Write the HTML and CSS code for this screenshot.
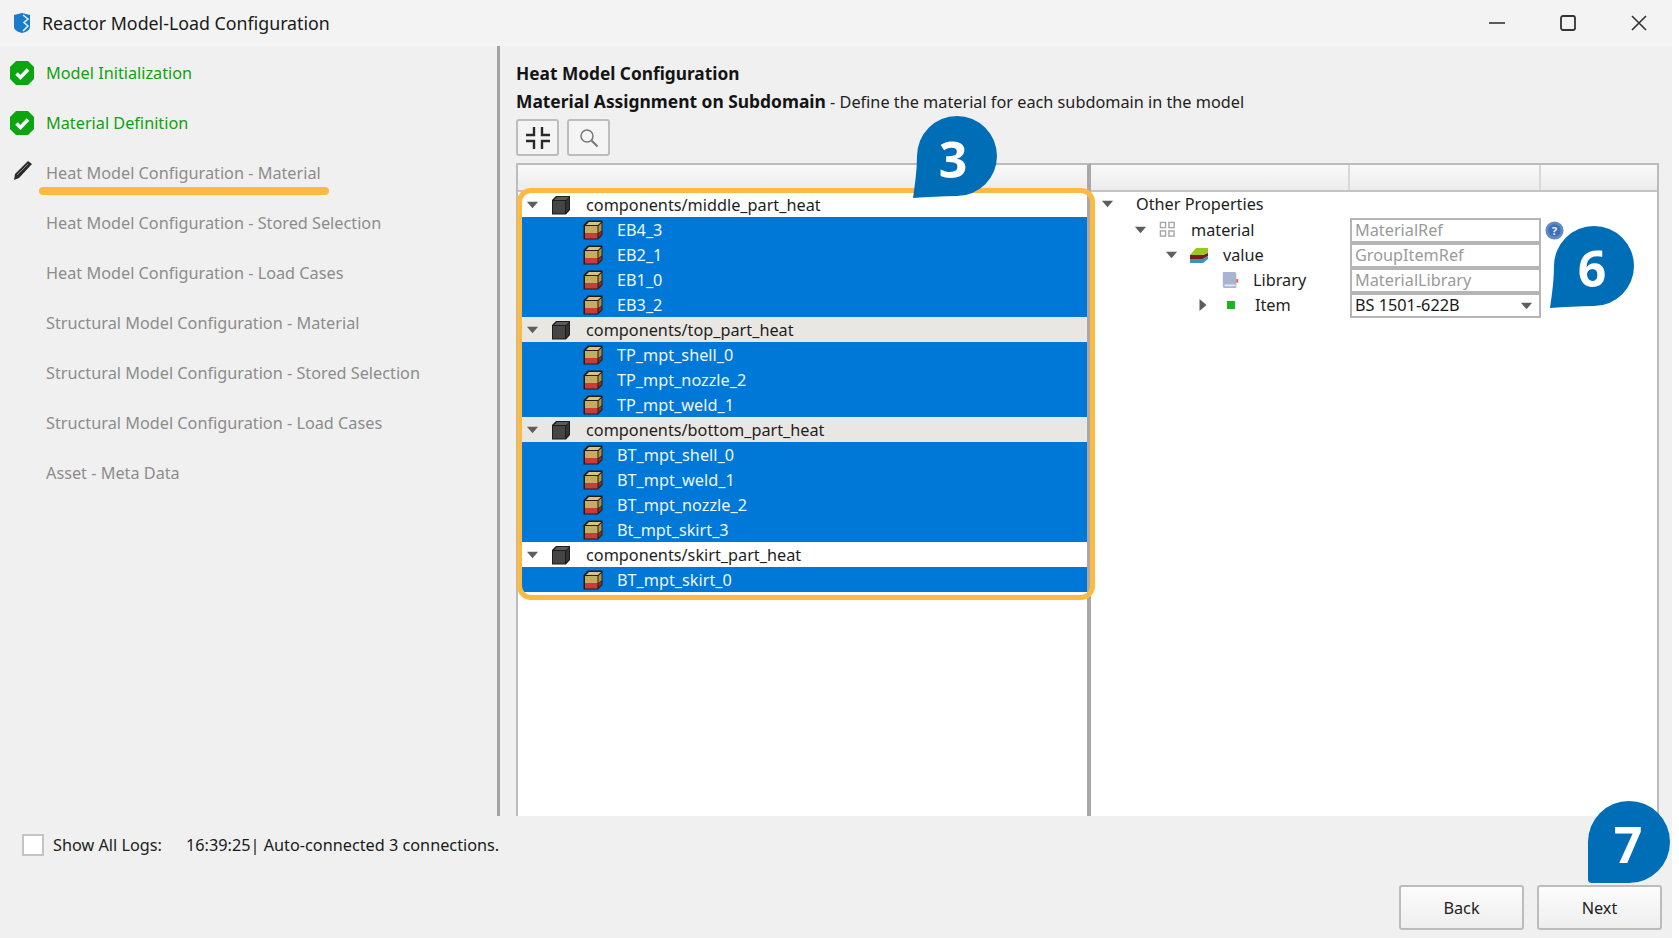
FILE: index.html
```html
<!DOCTYPE html>
<html lang="en">
<head>
<meta charset="utf-8">
<title>Reactor Model-Load Configuration</title>
<link rel="stylesheet" href="styles.css">
</head>
<body>
<svg class="defs" aria-hidden="true">
  <symbol id="tri-down" viewBox="0 0 14 8"><path d="M1 0.5H13L7 7.5Z" fill="#5e5e5e"/></symbol>
  <symbol id="tri-right" viewBox="0 0 8 14"><path d="M0.5 1V13L7.5 7Z" fill="#5e5e5e"/></symbol>
  <symbol id="group" viewBox="0 0 20 20"><path d="M1 5L5 1H19V15L15 19.5H1Z" fill="#1d1d1d"/><path d="M2 6H14V18.5H2Z" fill="#454545"/><path d="M3 5L6 2H18L15 5Z" fill="#5a5a5a"/><path d="M15 6L18 3V14L15 17.500Z" fill="#333"/></symbol>
  <symbol id="part" viewBox="0 0 20 20"><path d="M0.500 5L5 0.500H19.500V15L15 19.500H0.500Z" fill="#241c14"/><path d="M2 6H14.500V13H2Z" fill="#c4ad62"/><path d="M2 13H14.500V18.500H2Z" fill="#c93c3a"/><path d="M3 5L6 2H18L15 5Z" fill="#d8c47c"/><path d="M15.500 6L18.500 3V10.500L15.500 13Z" fill="#a8924c"/><path d="M15.500 13.500L18.500 11V14.500L15.500 17.500Z" fill="#8f2a28"/></symbol>
  <symbol id="check" viewBox="0 0 24 24"><path d="M6 0H18L24 6V18L18 24H6L0 18V6Z" fill="#0aa50f"/><path d="M6.500 12.500L10.500 16.500L18 8.500" fill="none" stroke="#fff" stroke-width="3.600"/></symbol>
</svg>

<div class="window">
  <header class="titlebar">
    <svg class="logo" viewBox="0 0 20 22"><path d="M2 3L10 1L18 3V15Q18 19 10 21Q2 19 2 15Z" fill="#1a7cc8"/><path d="M11 3L16 7L12 10.500L16 14L11 19" fill="none" stroke="#dcecf8" stroke-width="1.600"/></svg>
    <span class="title">Reactor Model-Load Configuration</span>
    <div class="controls">
      <span class="ctl"><svg viewBox="0 0 18 18"><path d="M1 9H17" stroke="#333" stroke-width="1.600"/></svg></span>
      <span class="ctl"><svg viewBox="0 0 18 18"><rect x="2" y="2" width="14" height="14" rx="2" fill="none" stroke="#333" stroke-width="1.800"/></svg></span>
      <span class="ctl"><svg viewBox="0 0 18 18"><path d="M2 2L16 16M16 2L2 16" stroke="#333" stroke-width="1.600"/></svg></span>
    </div>
  </header>

  <div class="main">
    <nav class="steps">
      <div class="step done"><svg class="step-icon"><use href="#check"/></svg><span>Model Initialization</span></div>
      <div class="step done"><svg class="step-icon"><use href="#check"/></svg><span>Material Definition</span></div>
      <div class="step active">
        <svg class="step-icon" viewBox="0 0 24 24"><path d="M4 22L5 16L18 3L22 6L9 20Z" fill="#2b2b2b"/><path d="M7 17L18 6" stroke="#8a8a8a" stroke-width="1"/></svg>
        <span>Heat Model Configuration - Material</span>
        <i class="underline"></i>
      </div>
      <div class="step"><span class="step-icon"></span><span>Heat Model Configuration - Stored Selection</span></div>
      <div class="step"><span class="step-icon"></span><span>Heat Model Configuration - Load Cases</span></div>
      <div class="step"><span class="step-icon"></span><span>Structural Model Configuration - Material</span></div>
      <div class="step"><span class="step-icon"></span><span>Structural Model Configuration - Stored Selection</span></div>
      <div class="step"><span class="step-icon"></span><span>Structural Model Configuration - Load Cases</span></div>
      <div class="step"><span class="step-icon"></span><span>Asset - Meta Data</span></div>
    </nav>

    <section class="content">
      <h1 class="heading">Heat Model Configuration</h1>
      <p class="sub"><b>Material Assignment on Subdomain</b> - Define the material for each subdomain in the model</p>
      <div class="tools">
        <button class="tool"><svg viewBox="0 0 26 26"><path d="M9 2V10H1M17 2V10H25M9 24V16H1M17 24V16H25" fill="none" stroke="#2a2a2a" stroke-width="2.400"/></svg></button>
        <button class="tool"><svg viewBox="0 0 20 20"><circle cx="8" cy="8" r="6" fill="none" stroke="#777" stroke-width="1.500"/><path d="M12.500 12.500L18.500 18.500" stroke="#777" stroke-width="2"/></svg></button>
      </div>

      <div class="panels">
        <div class="panel tree-panel">
          <div class="panel-head"></div>
          <div class="row group"><svg class="tri"><use href="#tri-down"/></svg><svg class="cube"><use href="#group"/></svg><span>components/middle_part_heat</span></div>
          <div class="row sel"><svg class="cube"><use href="#part"/></svg><span>EB4_3</span></div>
          <div class="row sel"><svg class="cube"><use href="#part"/></svg><span>EB2_1</span></div>
          <div class="row sel"><svg class="cube"><use href="#part"/></svg><span>EB1_0</span></div>
          <div class="row sel"><svg class="cube"><use href="#part"/></svg><span>EB3_2</span></div>
          <div class="row group alt"><svg class="tri"><use href="#tri-down"/></svg><svg class="cube"><use href="#group"/></svg><span>components/top_part_heat</span></div>
          <div class="row sel"><svg class="cube"><use href="#part"/></svg><span>TP_mpt_shell_0</span></div>
          <div class="row sel"><svg class="cube"><use href="#part"/></svg><span>TP_mpt_nozzle_2</span></div>
          <div class="row sel"><svg class="cube"><use href="#part"/></svg><span>TP_mpt_weld_1</span></div>
          <div class="row group alt"><svg class="tri"><use href="#tri-down"/></svg><svg class="cube"><use href="#group"/></svg><span>components/bottom_part_heat</span></div>
          <div class="row sel"><svg class="cube"><use href="#part"/></svg><span>BT_mpt_shell_0</span></div>
          <div class="row sel"><svg class="cube"><use href="#part"/></svg><span>BT_mpt_weld_1</span></div>
          <div class="row sel"><svg class="cube"><use href="#part"/></svg><span>BT_mpt_nozzle_2</span></div>
          <div class="row sel"><svg class="cube"><use href="#part"/></svg><span>Bt_mpt_skirt_3</span></div>
          <div class="row group"><svg class="tri"><use href="#tri-down"/></svg><svg class="cube"><use href="#group"/></svg><span>components/skirt_part_heat</span></div>
          <div class="row sel"><svg class="cube"><use href="#part"/></svg><span>BT_mpt_skirt_0</span></div>
          <div class="highlight"></div>
        </div>

        <div class="panel prop-panel">
          <div class="panel-head cols"><i></i><i></i><i></i></div>
          <div class="prop"><div class="pname lv0"><svg class="tri"><use href="#tri-down"/></svg><span>Other Properties</span></div></div>
          <div class="prop">
            <div class="pname lv1"><svg class="tri"><use href="#tri-down"/></svg>
              <svg class="picon" viewBox="0 0 18 18"><g fill="none" stroke="#a8a8a8" stroke-width="1.500"><rect x="1.500" y="1.500" width="5.500" height="5.500"/><rect x="10.500" y="1.500" width="5.500" height="5.500"/><rect x="1.500" y="10.500" width="5.500" height="5.500"/><rect x="10.500" y="10.500" width="5.500" height="5.500"/></g></svg>
              <span>material</span></div>
            <div class="field ro">MaterialRef</div>
            <svg class="help" viewBox="0 0 20 20"><circle cx="10" cy="10" r="9.500" fill="#5f8ac6"/><circle cx="10" cy="10" r="6.500" fill="#3f6fb5"/><text x="10" y="14.500" class="help-q">?</text></svg>
          </div>
          <div class="prop">
            <div class="pname lv2"><svg class="tri"><use href="#tri-down"/></svg>
              <svg class="picon" viewBox="0 0 20 18"><path d="M1 9L7 2H19V7L13 9Z" fill="#98c81e"/><path d="M1 9H14L19 7V10L14 13H1Z" fill="#7c1a22"/><path d="M1 13H14L19 10V13L14 17H1Z" fill="#3a92c4"/></svg>
              <span>value</span></div>
            <div class="field ro">GroupItemRef</div>
          </div>
          <div class="prop">
            <div class="pname lv3">
              <svg class="picon" viewBox="0 0 20 20"><path d="M2 2Q2 1 3 1H15Q17 1 17 3V18Q17 19 15 19H4Q2 19 2 17Z" fill="#a9b3d2"/><path d="M4 16H16" stroke="#e8e8ee" stroke-width="2"/><path d="M17 9H19V13H17Z" fill="#e8553f"/></svg>
              <span>Library</span></div>
            <div class="field ro">MaterialLibrary</div>
          </div>
          <div class="prop">
            <div class="pname lv4"><svg class="tri-r"><use href="#tri-right"/></svg>
              <svg class="dot" viewBox="0 0 8 8"><rect width="8" height="8" fill="#1eb31e"/></svg>
              <span>Item</span></div>
            <div class="field combo"><span>BS 1501-622B</span><svg class="tri"><use href="#tri-down"/></svg></div>
          </div>
        </div>
      </div>
    </section>
  </div>

  <div class="statusline">
    <span class="checkbox"></span>
    <span class="log-label">Show All Logs:</span>
    <span class="log-msg">16:39:25| Auto-connected 3 connections.</span>
  </div>
  <div class="actions">
    <button class="action">Back</button>
    <button class="action">Next</button>
  </div>

  <div class="badge badge-3"><svg viewBox="0 0 84 84"><path d="M0 82C2 68 4 54 4 40A40 40 0 1 1 44 80C30 80 14 81 0 82Z"/></svg><span>3</span></div>
  <div class="badge badge-6"><svg viewBox="0 0 84 84"><path d="M0 82C2 68 4 54 4 40A40 40 0 1 1 44 80C30 80 14 81 0 82Z"/></svg><span>6</span></div>
  <div class="badge badge-7"><svg viewBox="0 0 84 84"><path d="M0 80V42A42 42 0 1 1 42 84H4Q0 84 0 80Z"/></svg><span>7</span></div>
</div>
</body>
</html>
```

FILE: styles.css
```css
* { box-sizing: border-box; }
html, body { margin: 0; padding: 0; background: #fff; }
body { width: 1679px; height: 938px; overflow: hidden; font-family: "Noto Sans", "Liberation Sans", sans-serif; font-size: 16.25px; color: #1e1e1e; }
.defs { position: absolute; width: 0; height: 0; }

.window { position: relative; width: 1672px; height: 938px; background: #f0f0f0; display: flex; flex-direction: column; }

.titlebar { height: 46px; background: #f3f3f3; display: flex; align-items: center; padding-left: 12px; }
.logo { width: 20px; height: 22px; }
.title { margin-left: 10px; font-size: 17.8px; color: #1a1a1a; }
.controls { margin-left: auto; margin-right: -2px; display: flex; }
.ctl { width: 71px; display: flex; justify-content: center; }
.ctl svg { width: 18px; height: 18px; }

.main { height: 770px; display: flex; }

.steps { width: 500px; padding-top: 2px; border-right: 3px solid #a3a3a3; }
.step { position: relative; height: 50px; display: flex; align-items: center; color: #8c8c8c; padding-left: 10px; }
.step-icon { width: 24px; height: 24px; margin-right: 12px; flex: none; }
.step.done { color: #10a010; }
.step.active .step-icon { margin-top: -6px; }
.underline { position: absolute; left: 39px; top: 39px; width: 290px; height: 8px; border-radius: 4px; background: #fdb942; }

.content { flex: 1; padding-left: 16px; display: flex; flex-direction: column; }
.heading { margin: 15px 0 0; font-size: 17.3px; line-height: 26px; font-weight: 700; color: #141414; }
.sub { margin: 1px 0 0; line-height: 26px; color: #222; }
.sub b { font-size: 17.4px; font-weight: 700; color: #141414; }
.tools { display: flex; gap: 8px; margin-top: 4px; }
.tool { width: 43px; height: 37px; padding: 0; background: #f4f4f4; border: 2px solid #bdbdbd; border-radius: 3px; display: flex; align-items: center; justify-content: center; }
.tool:first-child svg { width: 26px; height: 26px; }
.tool:last-child svg { width: 20px; height: 20px; }

.panels { flex: 1; margin-top: 7px; display: flex; }
.panel { position: relative; background: #fff; border: 2px solid #bcbcbc; border-bottom: 0; }
.tree-panel { width: 575px; z-index: 1; }
.prop-panel { flex: none; width: 568px; border-left: 0; margin-right: 13px; }
.panels .tree-panel { border-right: 4px solid #a8a8a8; }
.panel-head { height: 27px; background: linear-gradient(#f9f9f9, #ececec); border-bottom: 2px solid #c4c4c4; }
.cols { display: grid; grid-template-columns: 259px 191px 1fr; margin-bottom: -1px; }
.cols i { border-right: 2px solid #d8d8d8; }
.cols i:last-child { border-right: 0; }

.row { height: 25px; display: flex; align-items: center; padding-left: 7px; white-space: nowrap; }
.row .tri { width: 13px; height: 8px; margin-left: 1px; flex: none; }
.row .cube { width: 20px; height: 20px; flex: none; }
.row.group .cube { margin-left: 12px; }
.row.group span { margin-left: 15px; }
.row.sel { padding-left: 62px; margin-left: 3px; background: #0078d7; color: #eef6fd; width: 566px; }
.row.sel span { margin-left: 14px; }
.row.alt { background: #e9e7e3; }
.highlight { position: absolute; left: -1px; top: 23px; width: 578px; height: 412px; border: 5px solid #fdb942; border-radius: 14px; }

.prop { height: 25px; display: grid; grid-template-columns: 259px 191px 26px; align-items: center; white-space: nowrap; }
.pname { display: flex; align-items: center; height: 25px; }
.pname .tri { width: 13px; height: 8px; flex: none; }
.lv0 { padding-left: 10px; }
.lv0 span { margin-left: 22px; }
.lv1 { padding-left: 43px; }
.lv1 span { margin-left: 15px; }
.lv2 { padding-left: 74px; }
.lv2 span { margin-left: 14px; }
.lv3 { padding-left: 129px; }
.lv3 span { margin-left: 13px; }
.lv4 { padding-left: 108px; }
.lv4 span { margin-left: 20px; }
.picon { width: 20px; height: 18px; margin-left: 11px; flex: none; }
.lv1 .picon { width: 17px; height: 17px; margin-left: 12px; }
.lv3 .picon { margin-left: 0; }
.tri-r { width: 8px; height: 14px; flex: none; }
.dot { width: 8px; height: 8px; margin-left: 20px; flex: none; }
.field { height: 25px; margin-top: 2px; border: 2px solid #b5b5b5; background: #fff; padding-left: 3px; line-height: 21px; }
.field.ro { color: #9a9a9a; }
.combo { display: flex; align-items: center; justify-content: space-between; color: #1a1a1a; padding-right: 6px; }
.combo .tri { width: 13px; height: 8px; }
.help { width: 19px; height: 19px; margin-left: 4px; margin-top: 1px; }
.help-q { font: 700 12px "Noto Sans", sans-serif; fill: #e8f0fa; text-anchor: middle; }

.statusline { display: flex; align-items: center; height: 57px; padding-left: 22px; }
.checkbox { width: 22px; height: 22px; background: #fff; border: 2px solid #c4c4c4; }
.log-label { margin-left: 9px; width: 133px; color: #222; }
.log-msg { color: #1a1a1a; }

.actions { display: flex; justify-content: flex-end; gap: 13px; padding-right: 10px; margin-top: 12px; }
.action { width: 125px; height: 45px; background: linear-gradient(#fcfcfc, #eeeeee); border: 2px solid #bcbcbc; border-radius: 3px; font: 16.25px "Noto Sans", sans-serif; color: #222; }

.badge { position: absolute; z-index: 2; width: 84px; height: 84px; }
.badge svg { display: block; width: 100%; height: 100%; fill: #006eb6; }
.badge span { position: absolute; left: 0; top: 3px; width: 80px; height: 80px; display: flex; align-items: center; justify-content: center; color: #fff; font: 700 50px "Open Sans", sans-serif; }
.badge-3 { left: 913px; top: 116px; }
.badge-6 { left: 1550px; top: 226px; }
.badge-6 span { left: 2px; top: 2px; }
.badge-7 { left: 1588px; top: 801px; width: 82px; height: 82px; }
```
